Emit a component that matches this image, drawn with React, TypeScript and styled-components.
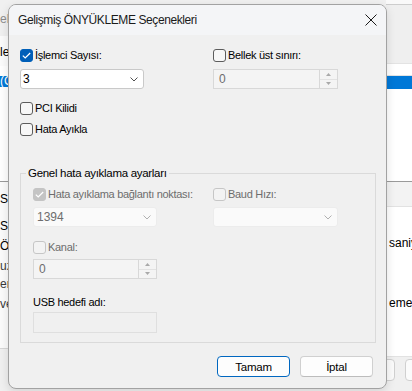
import React from "react";
import styled, { createGlobalStyle } from "styled-components";

const UI_FONT = `"Liberation Sans", Arial, sans-serif`;

const GlobalStyle = createGlobalStyle`
  html, body {
    margin: 0;
    padding: 0;
    background: #f0f0f0;
  }
  body {
    font-family: ${UI_FONT};
  }
`;

// ---------- Background window (msconfig) that peeks out around the dialog ----------

const Screen = styled.div`
  position: relative;
  width: 412px;
  height: 391px;
  overflow: hidden;
  background: #f0f0f0;
  font-family: ${UI_FONT};
  font-size: 12px;
`;

const BackWindow = styled.div`
  display: flex;
  height: 100%;
`;

const Strip = styled.div<{ $width: number }>`
  width: ${({ $width }) => $width}px;
  flex-shrink: 0;
  display: flex;
  flex-direction: column;
  overflow: hidden;
  white-space: nowrap;
`;

const Covered = styled.div`
  flex: 1;
`;

const BackTabs = styled.div`
  height: 36px;
  flex-shrink: 0;
  box-sizing: border-box;
  padding-top: 12px;
  line-height: 14px;
  color: #8d8d8d;
`;

const BackLabel = styled.div`
  height: 30px;
  flex-shrink: 0;
  box-sizing: border-box;
  padding-top: 9px;
  line-height: 14px;
  background: #fbfbfb;
  color: #000;
`;

const BackTopEdge = styled.div`
  height: 5px;
  flex-shrink: 0;
  box-sizing: border-box;
  background: #f9f9f9;
  border-bottom: 1px solid #cdcdcd;
`;

const BackGrey = styled.div<{ $h: number }>`
  height: ${({ $h }) => $h}px;
  flex-shrink: 0;
  background: #efefef;
`;

const ListHeader = styled.div`
  height: 13px;
  flex-shrink: 0;
  box-sizing: border-box;
  background: #fff;
  border-top: 1px solid #e3e3e3;
  border-bottom: 1px solid #e3e3e3;
`;

const BackList = styled.div<{ $h: number; $pad: number }>`
  height: ${({ $h }) => $h}px;
  flex-shrink: 0;
  box-sizing: border-box;
  padding-top: ${({ $pad }) => $pad}px;
  background: #fff;
  border-bottom: 1px solid #9a9a9a;
`;

const SelectedRow = styled.div<{ $h: number }>`
  height: ${({ $h }) => $h}px;
  flex-shrink: 0;
  background: #0078d7;
  color: #fff;
  line-height: ${({ $h }) => $h}px;
  font-size: 12px;
`;

const BackDetails = styled.div<{ $h: number }>`
  height: ${({ $h }) => $h}px;
  flex-shrink: 0;
  box-sizing: border-box;
  background: #fbfbfb;
  border-bottom: 1px solid #d6d6d6;
  padding-top: 10px;
`;

const BackPanel = styled.div<{ $h: number; $bg: string }>`
  height: ${({ $h }) => $h}px;
  flex-shrink: 0;
  box-sizing: border-box;
  padding-left: 3px;
  background: ${({ $bg }) => $bg};
  border-bottom: 1px solid #e2e2e2;
`;

const BackText = styled.div<{ $mt: number; $muted?: boolean }>`
  margin-top: ${({ $mt }) => $mt}px;
  line-height: 14px;
  color: ${({ $muted }) => ($muted ? "#3a3a3a" : "#000")};
`;

const BackFooter = styled.div`
  flex: 1;
  display: flex;
  gap: 10px;
  padding-top: 2px;
  background: #f0f0f0;
`;

const BackButton = styled.div<{ $ml?: number }>`
  width: 27px;
  height: 20px;
  flex-shrink: 0;
  margin-left: ${({ $ml }) => $ml ?? 0}px;
  border: 1px solid #d0d0d0;
  border-radius: 4px;
  background: #fbfbfb;
`;

// ---------- Dialog ----------

const Dialog = styled.div`
  position: absolute;
  left: 8px;
  top: 4px;
  width: 379px;
  box-sizing: border-box;
  border: 1px solid #a2a2a2;
  border-radius: 8px;
  background: #f0f0f0;
  overflow: hidden;
  box-shadow: 0 3px 10px rgba(0, 0, 0, 0.12);
  display: flex;
  flex-direction: column;
  font-size: 11px;
  letter-spacing: -0.3px;
  color: #000;
`;

const TitleBar = styled.div`
  height: 30px;
  display: flex;
  align-items: center;
  justify-content: space-between;
  padding: 0 9px;
  background: #f4f5f7;
`;

const Title = styled.span`
  font-size: 12px;
  letter-spacing: -0.4px;
  color: #1b1b1b;
`;

const CloseButton = styled.span`
  display: flex;
  width: 12px;
  height: 12px;
`;

const Body = styled.div`
  padding: 14px 13px 11px 11px;
  display: flex;
  flex-direction: column;
`;

const Columns = styled.div<{ $left: number }>`
  display: grid;
  grid-template-columns: ${({ $left }) => $left}px 1fr;
`;

const Column = styled.div`
  display: flex;
  flex-direction: column;
  align-items: flex-start;
`;

const CheckRow = styled.label<{ $mt?: number; $disabled?: boolean }>`
  display: flex;
  align-items: center;
  gap: 2px;
  height: 13px;
  margin-top: ${({ $mt }) => $mt ?? 0}px;
  color: ${({ $disabled }) => ($disabled ? "#6d6d6d" : "#000")};
  line-height: 13px;
  white-space: nowrap;
`;

const Box = styled.span<{ $checked?: boolean; $disabled?: boolean }>`
  width: 13px;
  height: 13px;
  box-sizing: border-box;
  border-radius: 3px;
  flex-shrink: 0;
  display: inline-flex;
  align-items: center;
  justify-content: center;
  border: 1px solid
    ${({ $checked, $disabled }) =>
      $checked ? ($disabled ? "#c4c4c4" : "#005fb8") : $disabled ? "#c6c6c6" : "#5c5c5c"};
  background: ${({ $checked, $disabled }) =>
    $checked ? ($disabled ? "#c4c4c4" : "#005fb8") : $disabled ? "#f3f3f3" : "#f7f7f7"};
`;

const Combo = styled.div<{ $mt?: number; $width: number; $disabled?: boolean }>`
  width: ${({ $width }) => $width}px;
  height: 20px;
  margin-top: ${({ $mt }) => $mt ?? 0}px;
  box-sizing: border-box;
  display: flex;
  align-items: center;
  justify-content: space-between;
  padding: 0 5px 0 ${({ $disabled }) => ($disabled ? 3 : 2)}px;
  border: 1px solid ${({ $disabled }) => ($disabled ? "#ececec" : "#c9c9c9")};
  border-radius: 3px;
  background: ${({ $disabled }) => ($disabled ? "#fafafa" : "#fff")};
  color: ${({ $disabled }) => ($disabled ? "#6d6d6d" : "#000")};
  font-size: 12px;
  letter-spacing: 0;
`;

const SpinBox = styled.div<{ $mt?: number; $width: number }>`
  width: ${({ $width }) => $width}px;
  height: 20px;
  margin-top: ${({ $mt }) => $mt ?? 0}px;
  box-sizing: border-box;
  display: flex;
  border: 1px solid #d8d8d8;
  background: #f4f4f4;
  color: #6d6d6d;
  font-size: 12px;
`;

const SpinValue = styled.span`
  flex: 1;
  padding-left: 5px;
  line-height: 18px;
`;

const SpinButtons = styled.div`
  width: 17px;
  display: flex;
  flex-direction: column;
  border-left: 1px solid #d8d8d8;
`;

const SpinHalf = styled.div<{ $top?: boolean }>`
  flex: 1;
  display: flex;
  align-items: center;
  justify-content: center;
  border-bottom: ${({ $top }) => ($top ? "1px solid #e2e2e2" : "none")};
`;

const GroupBox = styled.fieldset`
  width: 356px;
  box-sizing: border-box;
  min-width: 0;
  margin: 30px 0 0;
  padding: 8px 0 9px 0;
  border: 1px solid #dadada;
`;

const Legend = styled.legend`
  margin-left: 5px;
  padding: 0 2px;
  line-height: 14px;
  font-size: 11.5px;
  color: #000;
`;

const GroupContent = styled.div`
  padding-left: 12px;
`;

const FieldLabel = styled.div<{ $mt: number }>`
  margin-top: ${({ $mt }) => $mt}px;
  line-height: 14px;
  color: #000;
`;

const TextBox = styled.div<{ $mt: number; $width: number }>`
  width: ${({ $width }) => $width}px;
  height: 21px;
  margin-top: ${({ $mt }) => $mt}px;
  box-sizing: border-box;
  border: 1px solid #dfdfdf;
  background: #f0f0f0;
`;

const ButtonRow = styled.div`
  display: flex;
  justify-content: flex-end;
  gap: 10px;
  margin-top: 13px;
`;

const DialogButton = styled.button<{ $primary?: boolean }>`
  width: 73px;
  height: 21px;
  padding: 0;
  box-sizing: border-box;
  border: 1px solid ${({ $primary }) => ($primary ? "#0067c0" : "#d0d0d0")};
  border-bottom-color: ${({ $primary }) => ($primary ? "#0067c0" : "#bcbcbc")};
  border-radius: 4px;
  background: #fdfdfd;
  font-family: ${UI_FONT};
  font-size: 11.5px;
  letter-spacing: -0.2px;
  color: #000;
`;

// ---------- Small drawings ----------

const CheckMark = () => (
  <svg width="9" height="7" viewBox="0 0 9 7">
    <polyline points="0.8,3.6 3.2,6 8.2,1" fill="none" stroke="#fff" strokeWidth="1.2" />
  </svg>
);

const Chevron = ({ muted }: { muted?: boolean }) => (
  <svg width="8" height="5" viewBox="0 0 8 5">
    <polyline
      points="0.5,0.5 4,4 7.5,0.5"
      fill="none"
      stroke={muted ? "#b0b0b0" : "#505050"}
      strokeWidth="1"
    />
  </svg>
);

const Arrow = ({ down }: { down?: boolean }) => (
  <svg width="5" height="3" viewBox="0 0 5 3">
    <polygon points={down ? "0,0 5,0 2.5,3" : "0,3 5,3 2.5,0"} fill="#a9a9a9" />
  </svg>
);

const CloseIcon = () => (
  <svg width="12" height="12" viewBox="0 0 12 12">
    <path d="M0.5 0.5 L11.5 11.5 M11.5 0.5 L0.5 11.5" stroke="#1a1a1a" strokeWidth="1" />
  </svg>
);

// ---------- Pieces ----------

const Check: React.FC<{ label: string; checked?: boolean; disabled?: boolean; mt?: number }> = ({
  label,
  checked,
  disabled,
  mt,
}) => (
  <CheckRow $mt={mt} $disabled={disabled}>
    <Box $checked={checked} $disabled={disabled}>
      {checked && <CheckMark />}
    </Box>
    <span>{label}</span>
  </CheckRow>
);

const Spin: React.FC<{ width: number; mt?: number }> = ({ width, mt }) => (
  <SpinBox $width={width} $mt={mt}>
    <SpinValue>0</SpinValue>
    <SpinButtons>
      <SpinHalf $top>
        <Arrow />
      </SpinHalf>
      <SpinHalf>
        <Arrow down />
      </SpinHalf>
    </SpinButtons>
  </SpinBox>
);

export default function App() {
  return (
    <Screen>
      <GlobalStyle />
      <BackWindow>
        <Strip $width={9}>
          <BackTabs>ela</BackTabs>
          <BackLabel>le</BackLabel>
          <BackList $h={116} $pad={10}>
            <SelectedRow $h={11}>(C</SelectedRow>
          </BackList>
          <BackDetails $h={167}>
            <BackText $mt={0}>Se</BackText>
            <BackText $mt={13}>Se</BackText>
            <BackText $mt={6}>Ö</BackText>
            <BackText $mt={6} $muted>uz</BackText>
            <BackText $mt={4} $muted>er</BackText>
            <BackText $mt={6} $muted>ve</BackText>
          </BackDetails>
        </Strip>
        <Covered />
        <Strip $width={26}>
          <BackTopEdge />
          <BackGrey $h={58} />
          <ListHeader />
          <SelectedRow $h={13} />
          <BackList $h={93} $pad={0} />
          <BackPanel $h={25} $bg="#f3f3f3" />
          <BackPanel $h={150} $bg="#fff">
            <BackText $mt={29}>saniye</BackText>
            <BackText $mt={46}>eme a</BackText>
          </BackPanel>
          <BackFooter>
            <BackButton $ml={-20} />
            <BackButton />
          </BackFooter>
        </Strip>
      </BackWindow>

      <Dialog>
        <TitleBar>
          <Title>Gelişmiş ÖNYÜKLEME Seçenekleri</Title>
          <CloseButton>
            <CloseIcon />
          </CloseButton>
        </TitleBar>

        <Body>
          <Columns $left={193}>
            <Column>
              <Check label="İşlemci Sayısı:" checked />
              <Combo $width={124} $mt={7}>
                <span>3</span>
                <Chevron />
              </Combo>
              <Check label="PCI Kilidi" mt={13} />
              <Check label="Hata Ayıkla" mt={8} />
            </Column>
            <Column>
              <Check label="Bellek üst sınırı:" />
              <Spin width={125} mt={7} />
            </Column>
          </Columns>

          <GroupBox>
            <Legend>Genel hata ayıklama ayarları</Legend>
            <GroupContent>
              <Columns $left={180}>
                <Column>
                  <Check label="Hata ayıklama bağlantı noktası:" checked disabled />
                  <Combo $width={124} $mt={6} $disabled>
                    <span>1394</span>
                    <Chevron muted />
                  </Combo>
                  <Check label="Kanal:" disabled mt={14} />
                  <Spin width={124} mt={5} />
                  <FieldLabel $mt={16}>USB hedefi adı:</FieldLabel>
                  <TextBox $width={124} $mt={3} />
                </Column>
                <Column>
                  <Check label="Baud Hızı:" disabled />
                  <Combo $width={125} $mt={6} $disabled>
                    <span />
                    <Chevron muted />
                  </Combo>
                </Column>
              </Columns>
            </GroupContent>
          </GroupBox>

          <ButtonRow>
            <DialogButton $primary>Tamam</DialogButton>
            <DialogButton>İptal</DialogButton>
          </ButtonRow>
        </Body>
      </Dialog>
    </Screen>
  );
}
